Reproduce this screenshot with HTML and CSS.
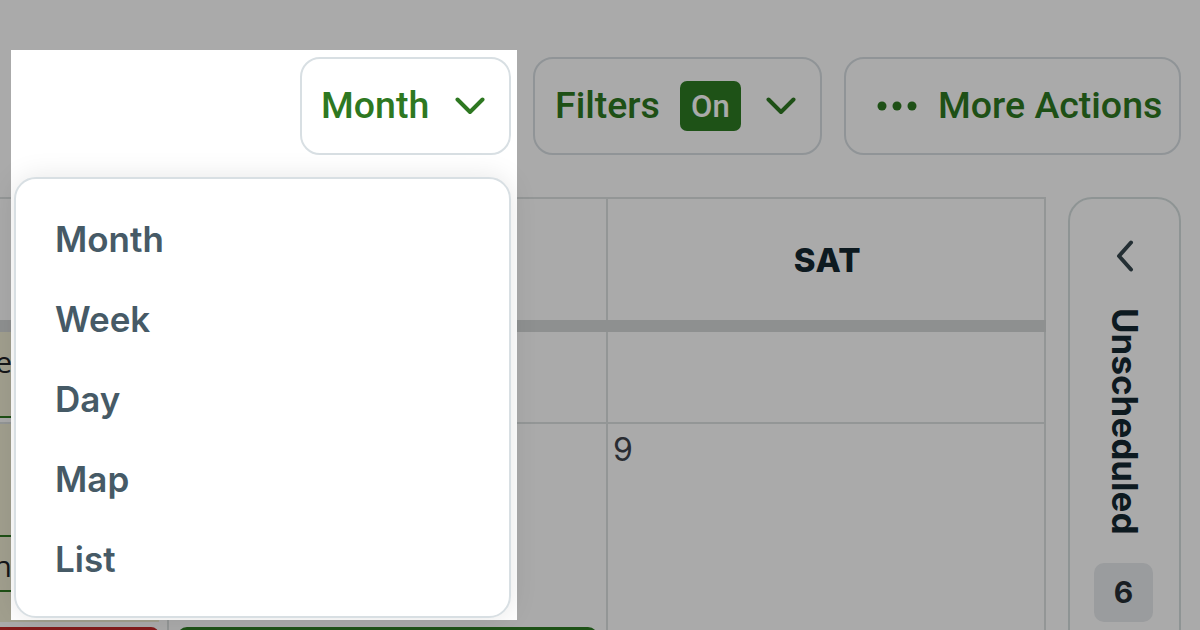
FILE: index.html
```html
<!DOCTYPE html>
<html lang="en">
<head>
<meta charset="utf-8">
<title>Calendar – view switcher</title>
<link rel="stylesheet" href="styles.css">
</head>
<body>
<div class="page">
  <header class="toolbar">
    <div class="view-switch">
      <button class="btn btn-view">
        <span>Month</span>
        <svg class="chev" viewBox="0 0 30 18" width="30" height="18"><path d="M2.5 2.5 L15 15 L27.5 2.5"/></svg>
      </button>
      <ul class="dropdown">
        <li>Month</li>
        <li>Week</li>
        <li>Day</li>
        <li>Map</li>
        <li>List</li>
      </ul>
    </div>
    <button class="btn btn-filters">
      <span>Filters</span>
      <span class="badge-on">On</span>
      <svg class="chev" viewBox="0 0 30 18" width="30" height="18"><path d="M2.5 2.5 L15 15 L27.5 2.5"/></svg>
    </button>
    <button class="btn btn-more">
      <svg class="dots" viewBox="0 0 40 10" width="40" height="10"><circle cx="5" cy="5" r="4.5"/><circle cx="20" cy="5" r="4.5"/><circle cx="35" cy="5" r="4.5"/></svg>
      <span>More Actions</span>
    </button>
  </header>

  <main class="content">
    <section class="calendar">
      <div class="cal-row cal-head">
        <div class="cell"></div>
        <div class="cell head-cell">FRI</div>
        <div class="cell head-cell">SAT</div>
      </div>
      <div class="cal-row cal-allday">
        <div class="cell cell-events">
          <div class="chip chip-cream chip-a"><span class="chip-tail">Fence</span></div>
        </div>
        <div class="cell"></div>
        <div class="cell"></div>
      </div>
      <div class="cal-row cal-week">
        <div class="cell cell-events">
          <div class="chip chip-cream chip-b"></div>
          <div class="chip chip-cream chip-c"><span class="chip-tail">Kitchen</span></div>
          <div class="chip chip-cream chip-d"></div>
          <div class="chip chip-red"></div>
        </div>
        <div class="cell cell-fri">
          <div class="chip chip-green"></div>
        </div>
        <div class="cell"><span class="day-num">9</span></div>
      </div>
    </section>

    <aside class="unscheduled">
      <svg class="chev-left" viewBox="0 0 18 32" width="18" height="32"><path d="M15 2.5 L3 16 L15 29.5"/></svg>
      <span class="unsched-label">Unscheduled</span>
      <span class="count">6</span>
    </aside>
  </main>

  <div class="overlay"></div>
  <div class="spotlight"></div>
</div>
</body>
</html>
```

FILE: styles.css
```css
* { box-sizing: border-box; }

html, body {
  margin: 0;
  padding: 0;
  background: #ffffff;
}

.page {
  position: relative;
  width: 1200px;
  height: 630px;
  overflow: hidden;
  font-family: Roboto, "Liberation Sans", sans-serif;
}

/* ---------- toolbar ---------- */
.toolbar {
  display: flex;
  justify-content: flex-end;
  gap: 22px;
  padding: 57px 19px 0 0;
}

.btn {
  display: flex;
  align-items: center;
  flex: none;
  height: 98px;
  border: 2px solid #d8dfe3;
  border-radius: 20px;
  background: #ffffff;
  color: #2e7821;
  font-family: Roboto, "Liberation Sans", sans-serif;
  font-weight: 500;
  font-size: 37.5px;
  line-height: 1;
  white-space: nowrap;
  margin: 0;
  cursor: pointer;
}

.chev {
  flex: none;
  fill: none;
  stroke: currentColor;
  stroke-width: 4;
  stroke-linecap: round;
  stroke-linejoin: round;
}

.view-switch {
  position: relative;
  z-index: 12;
}

.btn-view {
  width: 211px;
  padding: 0 24px 0 19px;
  gap: 26px;
}

.btn-filters {
  width: 289px;
  padding: 0 24px 0 20px;
}
.btn-filters .badge-on {
  margin-left: 20px;
  margin-right: 25px;
  width: 61px;
  height: 50px;
  border-radius: 7px;
  background: #2e7c23;
  color: #ffffff;
  font-size: 31px;
  display: flex;
  align-items: center;
  justify-content: center;
}

.btn-more {
  width: 337px;
  padding: 0 10px 0 31px;
  gap: 21px;
}
.dots { flex: none; fill: currentColor; }

/* ---------- dropdown ---------- */
.dropdown {
  position: absolute;
  right: 0;
  top: 120px;
  width: 497px;
  margin: 0;
  padding: 20px 0 17px;
  list-style: none;
  background: #ffffff;
  border: 2px solid #d8dfe3;
  border-radius: 22px;
  box-shadow: 0 0 28px rgba(0, 0, 0, 0.10);
}
.dropdown li {
  height: 80px;
  display: flex;
  align-items: center;
  padding-left: 39px;
  font-family: Inter, "Noto Sans", sans-serif;
  font-weight: 600;
  font-size: 35px;
  color: #465a66;
}

/* ---------- content ---------- */
.content {
  display: flex;
  gap: 22px;
  margin-top: 42px;
  padding-right: 19px;
}

.calendar {
  flex: none;
  width: 1046px;
}

.cal-row {
  display: grid;
  grid-template-columns: 169px 439px 438px;
}

.cell {
  border-right: 2px solid #dde2e2;
}

.cal-head {
  height: 135px;
  border-top: 2px solid #dde2e2;
  border-bottom: 12px solid #d5d9d9;
}
.head-cell {
  display: flex;
  align-items: center;
  justify-content: center;
  padding-left: 3px;
  font-family: Inter, "Noto Sans", sans-serif;
  font-weight: 800;
  font-size: 33px;
  letter-spacing: 0.5px;
  color: #142730;
}

.cal-allday {
  height: 92px;
  border-bottom: 2px solid #dde2e2;
}

.cal-week {
  height: 320px;
}

.day-num {
  display: block;
  padding: 6px 0 0 5px;
  font-family: Inter, "Noto Sans", sans-serif;
  font-weight: 400;
  font-size: 32px;
  color: #3e434b;
}

.cell-events {
  display: flex;
  flex-direction: column;
  padding-right: 8px;
}

.chip {
  flex: none;
}
.chip-cream {
  background: #f2efd6;
  border-bottom: 2px solid #2e7821;
}
.chip-tail {
  display: block;
  width: 12px;
  direction: rtl;
  overflow: hidden;
  white-space: nowrap;
  font-family: "Open Sans", sans-serif;
  font-size: 30px;
  line-height: 1.2;
  color: #1e2226;
}
.chip-a { height: 86px; padding-top: 12px; }
.chip-b { height: 113px; }
.chip-c { height: 55px; padding-top: 11px; }
.chip-d { height: 30px; border-bottom: 0; }
.chip-red {
  height: 30px;
  margin-top: 5px;
  background: #c62a2a;
  border-radius: 0 8px 0 0;
}

.cell-fri {
  padding: 203px 8px 0 8px;
}
.chip-green {
  height: 30px;
  background: #2e7c23;
  border-radius: 10px 10px 0 0;
}

/* ---------- unscheduled panel ---------- */
.unscheduled {
  flex: none;
  width: 113px;
  height: 460px;
  border: 2px solid #d6dfdf;
  border-radius: 24px;
  display: flex;
  flex-direction: column;
  align-items: center;
  padding-top: 41px;
}
.chev-left {
  fill: none;
  stroke: #37474f;
  stroke-width: 4;
  stroke-linecap: round;
  stroke-linejoin: round;
}
.unsched-label {
  margin-top: 36px;
  writing-mode: vertical-rl;
  font-family: Inter, "Noto Sans", sans-serif;
  font-weight: 700;
  font-size: 35px;
  color: #142730;
  line-height: 1;
}
.count {
  margin-top: 28px;
  margin-left: -2px;
  width: 59px;
  height: 59px;
  border-radius: 10px;
  background: #e7eaed;
  display: flex;
  align-items: center;
  justify-content: center;
  font-family: Inter, "Noto Sans", sans-serif;
  font-weight: 700;
  font-size: 30px;
  color: #262e35;
}

/* ---------- tour overlay ---------- */
.overlay {
  position: absolute;
  inset: 0;
  background: rgba(0, 0, 0, 0.333);
  z-index: 10;
}
.spotlight {
  position: absolute;
  left: 11px;
  top: 50px;
  width: 506px;
  height: 570px;
  background: #ffffff;
  z-index: 11;
}
```
